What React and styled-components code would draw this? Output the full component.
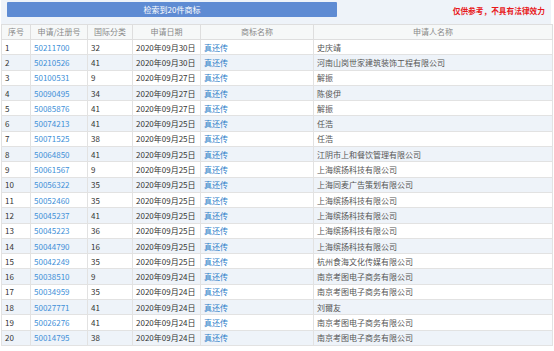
import React from 'react';
import styled, { createGlobalStyle } from 'styled-components';

const GlobalStyle = createGlobalStyle`
  html, body {
    margin: 0;
    padding: 0;
    background: #ffffff;
  }
  body {
    font-family: "Noto Sans CJK SC", "Noto Sans", sans-serif;
  }
`;

const Page = styled.div`
  width: 554px;
  height: 351px;
  overflow: hidden;
  padding-left: 1px;
  box-sizing: border-box;
`;

const TopBar = styled.div`
  width: 550px;
  height: 24px;
  background: #eef3f9;
  display: flex;
  align-items: flex-start;
  justify-content: space-between;
  padding: 2px 6px 0 6px;
  box-sizing: border-box;
`;

const ResultButton = styled.div`
  width: 330px;
  height: 15px;
  background: #5e8bd3;
  color: #ffffff;
  font-size: 8px;
  line-height: 15px;
  text-align: center;
  border-radius: 1px;
`;

const Notice = styled.div`
  color: #e8191c;
  font-size: 7.7px;
  font-weight: bold;
  line-height: 15px;
  margin-top: 1px;
`;

const Table = styled.table`
  width: 551px;
  border-collapse: collapse;
  table-layout: fixed;
  font-size: 8px;
`;

const HeadCell = styled.th`
  height: 14px;
  padding: 0;
  background: #f6f8f8;
  border: 1px solid #dedede;
  color: #888888;
  font-weight: normal;
  text-align: center;
  line-height: 14px;
  white-space: nowrap;
  overflow: hidden;
`;

const Row = styled.tr`
  height: 15.3px;
  background: ${({ $alt }) => ($alt ? '#eef3f9' : '#ffffff')};
`;

const Cell = styled.td`
  padding: 0 3px;
  border: 1px solid #e2e2e2;
  color: ${({ $tone }) =>
    $tone === 'link' ? '#3e90d8' : $tone === 'name' ? '#2a7cc8' : $tone === 'soft' ? '#555555' : '#333333'};
  line-height: 13px;
  white-space: nowrap;
  overflow: hidden;
`;

const columns = [
  { title: '序号', width: 29 },
  { title: '申请/注册号', width: 57 },
  { title: '国际分类', width: 45 },
  { title: '申请日期', width: 68 },
  { title: '商标名称', width: 113 },
  { title: '申请人名称', width: 239 },
];

const rows = [
  ['50211700', '32', '2020年09月30日', '史庆靖'],
  ['50210526', '41', '2020年09月30日', '河南山岗世家建筑装饰工程有限公司'],
  ['50100531', '9', '2020年09月27日', '解振'],
  ['50090495', '34', '2020年09月27日', '陈俊伊'],
  ['50085876', '41', '2020年09月27日', '解振'],
  ['50074213', '41', '2020年09月25日', '任浩'],
  ['50071525', '38', '2020年09月25日', '任浩'],
  ['50064850', '41', '2020年09月25日', '江阴市上和餐饮管理有限公司'],
  ['50061567', '9', '2020年09月25日', '上海缤扬科技有限公司'],
  ['50056322', '35', '2020年09月25日', '上海同麦广告策划有限公司'],
  ['50052460', '35', '2020年09月25日', '上海缤扬科技有限公司'],
  ['50045237', '41', '2020年09月25日', '上海缤扬科技有限公司'],
  ['50045223', '36', '2020年09月25日', '上海缤扬科技有限公司'],
  ['50044790', '16', '2020年09月25日', '上海缤扬科技有限公司'],
  ['50042249', '35', '2020年09月25日', '杭州食海文化传媒有限公司'],
  ['50038510', '9', '2020年09月24日', '南京考图电子商务有限公司'],
  ['50034959', '35', '2020年09月24日', '南京考图电子商务有限公司'],
  ['50027771', '41', '2020年09月24日', '刘爾友'],
  ['50026276', '41', '2020年09月24日', '南京考图电子商务有限公司'],
  ['50014795', '38', '2020年09月24日', '南京考图电子商务有限公司'],
];

const App = () => {
  return (
    <Page>
      <GlobalStyle />
      <TopBar>
        <ResultButton>检索到20件商标</ResultButton>
        <Notice>仅供参考，不具有法律效力</Notice>
      </TopBar>
      <Table>
        <colgroup>
          {columns.map((c) => (
            <col key={c.title} style={{ width: c.width }} />
          ))}
        </colgroup>
        <thead>
          <tr>
            {columns.map((c) => (
              <HeadCell key={c.title}>{c.title}</HeadCell>
            ))}
          </tr>
        </thead>
        <tbody>
          {rows.map((r, i) => (
            <Row key={r[0]} $alt={i % 2 === 1}>
              <Cell>{i + 1}</Cell>
              <Cell $tone="link">{r[0]}</Cell>
              <Cell>{r[1]}</Cell>
              <Cell>{r[2]}</Cell>
              <Cell $tone="name">真还传</Cell>
              <Cell $tone="soft">{r[3]}</Cell>
            </Row>
          ))}
        </tbody>
      </Table>
    </Page>
  );
};

export default App;
